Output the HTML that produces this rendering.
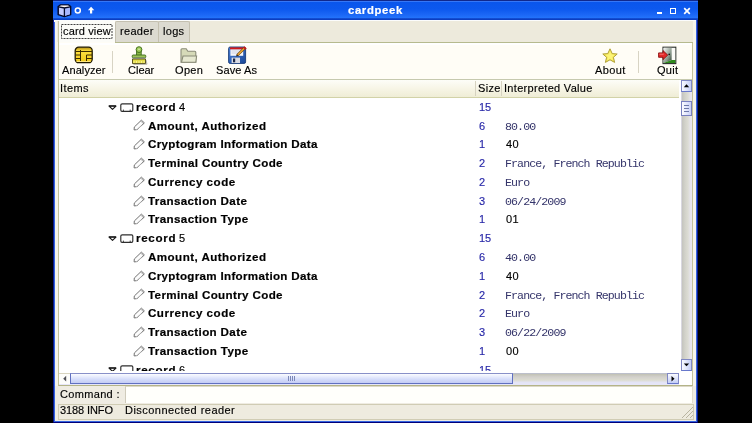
<!DOCTYPE html>
<html><head><meta charset="utf-8">
<style>
*{margin:0;padding:0;box-sizing:border-box}
html,body{width:752px;height:423px;overflow:hidden;background:#000}
body{position:relative;font-family:"Liberation Sans",sans-serif;font-size:11px;color:#000}
.a{position:absolute}
.t{position:absolute;white-space:pre;line-height:11px;will-change:transform;-webkit-text-stroke:0.15px currentColor}
.m{font-family:"Liberation Mono",monospace;-webkit-text-stroke:0}
.b{font-weight:700;-webkit-text-stroke:0.2px currentColor}
svg{position:absolute;overflow:visible}
</style></head><body>

<!-- window frame -->
<div class="a" style="left:53px;top:0;width:645px;height:423px;background:#0a1a8a"></div>
<div class="a" style="left:54px;top:0;width:643px;height:422px;background:#3464e0"></div>
<div class="a" style="left:53px;top:422px;width:645px;height:1px;background:#000078"></div>
<!-- title bar -->
<div class="a" style="left:53px;top:0;width:645px;height:20px;background:linear-gradient(#10288c 0px,#10288c 0.8px,#3a7af8 1.4px,#0a56ec 2.4px,#0c58ee 9px,#1c68f6 15px,#2272fa 17.6px,#0c40c4 18.8px,#0a3cc0 20px)"></div>
<div class="a" style="left:54px;top:20px;width:642px;height:1.5px;background:#fbfcfc"></div>
<!-- content bg -->
<div class="a" style="left:55px;top:20.5px;width:641px;height:400.5px;background:#f6f4ea"></div>
<!-- title icons -->
<svg style="left:57px;top:4px" width="15" height="14" viewBox="0 0 15 14">
  <path d="M1.2 2.6 L3.6 0.9 L11.4 0.9 L13.6 2.6 L13.6 10.6 L7.4 12.6 L1.2 10.6 Z" fill="#c4ccff" stroke="#060a28" stroke-width="1.5" stroke-linejoin="round"/>
  <path d="M1.8 2.7 L3.9 1.5 L11.1 1.5 L13 2.7 L7.4 3.9 Z" fill="#fff4f0"/>
  <path d="M7.4 4 L13 2.9 L13 10.3 L7.4 12 Z" fill="#a8b8ff"/>
  <path d="M1.6 2.8 L7.4 4 L13.2 2.8 M7.4 4 L7.4 12.3" fill="none" stroke="#060a28" stroke-width="1.3"/>
</svg>
<svg style="left:74px;top:7px" width="8" height="8" viewBox="0 0 8 8"><circle cx="3.8" cy="3.5" r="2.5" fill="none" stroke="#fff" stroke-width="1.5"/></svg>
<svg style="left:87px;top:6px" width="8" height="8" viewBox="0 0 8 8"><path d="M4.1 0.8 L7.3 4.2 L5.2 4.2 L5.2 7.6 L3 7.6 L3 4.2 L0.9 4.2 Z" fill="#fff"/></svg>

<div class="t b" style="left:348px;top:4.3px;font-size:11.3px;line-height:12px;color:#fff;letter-spacing:0.65px">cardpeek</div>

<!-- title buttons -->
<div class="a" style="left:657px;top:11.5px;width:5.2px;height:2.5px;background:#fff"></div>
<div class="a" style="left:669.8px;top:7.8px;width:6.6px;height:6.2px;border:1.1px solid #fff;border-top-width:1.8px"></div>
<svg style="left:682.5px;top:6.5px" width="8" height="8" viewBox="0 0 8 8"><path d="M1.2 1.2 L6.8 6.8 M6.8 1.2 L1.2 6.8" stroke="#fff" stroke-width="1.7"/></svg>

<!-- tabs -->
<div class="a" style="left:57px;top:21px;width:636px;height:21px;background:#edeadc"></div>
<div class="a" style="left:115px;top:21px;width:44px;height:21px;background:#dcdad0;border:1px solid #c4c0b0;border-bottom:none;border-radius:2px 2px 0 0"></div>
<div class="a" style="left:158px;top:21px;width:32px;height:21px;background:#dcdad0;border:1px solid #c4c0b0;border-bottom:none;border-radius:2px 2px 0 0"></div>
<div class="a" style="left:58px;top:20.5px;width:57px;height:22.5px;background:#fcfcf8;border-left:1px solid #c8c6a4"></div>
<svg style="left:61px;top:24px" width="52" height="15"><rect x="0.5" y="0.5" width="50.5" height="14" fill="none" stroke="#404040" stroke-width="1" stroke-dasharray="2 1"/></svg>
<div class="t" style="left:63px;top:25.5px;letter-spacing:0.15px">card view</div>
<div class="t" style="left:120px;top:25.5px;letter-spacing:0.3px">reader</div>
<div class="t" style="left:163px;top:25.5px;letter-spacing:0.3px">logs</div>

<!-- notebook page -->
<div class="a" style="left:58px;top:42px;width:635px;height:343.5px;background:#fffdf6;border:1px solid #c4c29c;border-top:none;border-bottom-color:#b4b488"></div>
<div class="a" style="left:115px;top:42px;width:578px;height:1px;background:#b6ba8e"></div>
<div class="a" style="left:59px;top:43px;width:633px;height:1.5px;background:#ffffff"></div>

<!-- toolbar bottom line -->
<div class="a" style="left:59px;top:79px;width:633px;height:1px;background:#c6c9ae"></div>

<!-- toolbar icons -->
<svg style="left:74px;top:46px" width="20" height="18" viewBox="0 0 20 18">
  <defs><linearGradient id="gold" x1="0" y1="0" x2="0" y2="1"><stop offset="0" stop-color="#b08a10"/><stop offset="0.25" stop-color="#ffe040"/><stop offset="1" stop-color="#f0c818"/></linearGradient></defs>
  <rect x="1.2" y="1.2" width="17" height="15.5" rx="3.5" fill="url(#gold)" stroke="#201a00" stroke-width="1.3"/>
  <path d="M1.5 5.5 H6.5 M1.5 9 H6.5 M1.5 12.5 H6.5 M12.5 9 H18 M12.5 12.5 H18 M6.5 4 V15.5 M12.5 9 V15.5 M6.5 5.5 H18" stroke="#3a2c00" stroke-width="1"/>
  <rect x="2.5" y="15" width="14" height="1" fill="#ffe880"/>
</svg>
<svg style="left:131px;top:45.5px" width="18" height="19" viewBox="0 0 18 19">
  <rect x="5.6" y="3.5" width="4.6" height="6" fill="#8ab848" stroke="#3c6a18" stroke-width="0.9"/>
  <circle cx="8" cy="3.6" r="2.9" fill="#a0cc58" stroke="#3c6a18" stroke-width="0.9"/>
  <circle cx="8" cy="3.2" r="0.8" fill="#e0f0c0"/>
  <rect x="1.2" y="9" width="13.6" height="2.8" rx="1" fill="#9cc458" stroke="#3c6a18" stroke-width="0.9"/>
  <rect x="1.5" y="11.8" width="13" height="1.2" fill="#b8b8c0"/>
  <path d="M1.5 13 H14.5 V17.6 H1.5 Z" fill="#e4dc48" stroke="#4a4410" stroke-width="0.9"/>
  <path d="M3 17 V15 M5.5 17 V15 M8 17 V15 M10.5 17 V15 M13 17 V15" stroke="#fff8b0" stroke-width="0.7"/>
  <path d="M15 14 L16 18.2 L2.5 18.4" fill="none" stroke="#606060" stroke-opacity="0.5" stroke-width="0.9"/>
</svg>
<svg style="left:180px;top:48px" width="18" height="16" viewBox="0 0 18 16">
  <path d="M1 1.8 Q1 0.8 2 0.8 L6.2 0.8 L7.8 3.2 L14.8 3.2 Q15.8 3.2 15.8 4.2 L15.8 14.2 L1 14.2 Z" fill="#d6dab8" stroke="#8a8c78" stroke-width="1.1"/>
  <path d="M3 8 L16.6 8 L15.8 14.2 L1.5 14.2 Z" fill="#e6e8d0" stroke="#8a8c78" stroke-width="1.1"/>
</svg>
<svg style="left:228px;top:46px" width="19" height="18" viewBox="0 0 19 18">
  <defs><linearGradient id="fl" x1="0" y1="0" x2="1" y2="1"><stop offset="0" stop-color="#4a80d8"/><stop offset="1" stop-color="#1a4898"/></linearGradient></defs>
  <rect x="0.6" y="1" width="17" height="16.4" rx="1.5" fill="url(#fl)" stroke="#183a78" stroke-width="0.9"/>
  <rect x="2.4" y="3.2" width="12.8" height="6.6" fill="#f6f6f8"/>
  <rect x="2" y="1.4" width="14" height="1.9" fill="#d41818"/>
  <path d="M3.5 5 H12 M3.5 7 H10" stroke="#b0b8d8" stroke-width="0.6"/>
  <rect x="3.6" y="11.6" width="8.4" height="5.4" fill="#dadce4"/>
  <rect x="5" y="12.5" width="2.2" height="3.8" fill="#1c2848"/>
  <path d="M9.2 9.4 L16.8 1.8" stroke="#5a3a10" stroke-width="2.6"/>
  <path d="M9.4 9.2 L16.6 2" stroke="#f0a830" stroke-width="1.6"/>
  <path d="M15.8 1 L18 3.1" stroke="#c81818" stroke-width="2"/>
  <path d="M8.4 10.2 L9.8 8.8" stroke="#302010" stroke-width="1.2"/>
</svg>
<svg style="left:602px;top:48px" width="16" height="16" viewBox="0 0 16 16">
  <path d="M8 0.8 L10.2 5.6 L15.2 6 L11.4 9.3 L12.6 14.4 L8 11.8 L3.4 14.4 L4.6 9.3 L0.8 6 L5.8 5.6 Z" fill="#f6ea5c" stroke="#b0a038" stroke-width="1" stroke-linejoin="round"/>
  <path d="M8 3.5 L9.3 6.6 L12.4 6.9 L10 9 L10.8 12.2 L8 10.5 L5.2 12.2 L6 9 L3.6 6.9 L6.7 6.6 Z" fill="#fcf478" />
</svg>
<svg style="left:657px;top:46px" width="20" height="19" viewBox="0 0 20 19">
  <defs><linearGradient id="dr" x1="0" y1="0" x2="1" y2="1"><stop offset="0" stop-color="#f8f8f8"/><stop offset="0.6" stop-color="#8a9a8c"/><stop offset="1" stop-color="#2a3a2a"/></linearGradient></defs>
  <rect x="6" y="1.2" width="12.8" height="16.4" fill="#f0f0ee" stroke="#2a2e2a" stroke-width="1.1"/>
  <path d="M6.5 1.7 L14.6 1.7 L14.6 14 L6.5 17.1 Z" fill="url(#dr)"/>
  <path d="M6.5 17.1 L14.6 14 L18.3 14 L18.3 17.1 Z" fill="#2e8a1c"/>
  <rect x="15" y="2" width="3.2" height="12" fill="#fafaf6"/>
  <circle cx="12.2" cy="8.4" r="0.8" fill="#101010"/>
  <path d="M1.6 6.9 L6 6.9 L6 4.6 L10.7 9.1 L6 13.6 L6 11.3 L1.6 11.3 Z" fill="#e42a2a" stroke="#8a1010" stroke-width="0.9" stroke-linejoin="round"/>
  <path d="M2.4 8.2 H6.8" stroke="#ff8888" stroke-width="0.8"/>
</svg>

<!-- toolbar separators -->
<div class="a" style="left:111.5px;top:51px;width:1px;height:22px;background:#d8d4c4"></div>
<div class="a" style="left:638px;top:51px;width:1px;height:22px;background:#d8d4c4"></div>

<!-- toolbar labels -->
<div class="t" style="left:62px;top:65.2px;letter-spacing:0.09px">Analyzer</div>
<div class="t" style="left:128px;top:65.2px;letter-spacing:0px">Clear</div>
<div class="t" style="left:174.5px;top:65.2px;letter-spacing:0.35px">Open</div>
<div class="t" style="left:216px;top:65.2px;letter-spacing:0.1px">Save As</div>
<div class="t" style="left:594.5px;top:65.2px;letter-spacing:0.4px">About</div>
<div class="t" style="left:656.5px;top:65.2px;letter-spacing:0.27px">Quit</div>

<!-- tree view -->
<div class="a" style="left:59px;top:80px;width:633px;height:305px;background:#fff"></div>
<!-- header -->
<div class="a" style="left:59px;top:80px;width:619.5px;height:18px;background:linear-gradient(#fdfdf8,#f7f5e6 50%,#efedd6);border-bottom:1px solid #d2d2a8"></div>
<div class="a" style="left:475px;top:81px;width:1px;height:15px;background:#d6d2c0"></div>
<div class="a" style="left:501px;top:81px;width:1px;height:15px;background:#d6d2c0"></div>
<div class="t" style="left:60px;top:83.3px;letter-spacing:0.4px">Items</div>
<div class="t" style="left:477.5px;top:83.3px;letter-spacing:0.33px">Size</div>
<div class="t" style="left:504px;top:83.3px;letter-spacing:0.3px">Interpreted Value</div>

<!-- rows -->
<div><div class="a" style="left:58px;top:97px;width:621px;height:274px;overflow:hidden">
<svg style="left:49.5px;top:7.70px" width="9" height="5" viewBox="0 0 9 5"><path d="M1 1 L8 1 L4.5 4.3 Z" fill="#fff" stroke="#1a1a1a" stroke-width="1.15" stroke-linejoin="round"/><path d="M1 1 L8 1" stroke="#1a1a1a" stroke-width="1.4"/></svg>
<svg style="left:62px;top:5.60px" width="14" height="10" viewBox="0 0 14 10"><path d="M2.2 0.8 H11.6 Q12.8 0.8 12.8 2 V7 Q12.8 8.3 11.6 8.3 H2 Q0.8 8.3 0.8 7 V2 Q0.8 0.8 2.2 0.8 Z" fill="#fff" stroke="#2e2e2e" stroke-width="1.15"/><path d="M3.4 8.3 V6.6 M10.2 8.3 V6.6" stroke="#2e2e2e" stroke-width="0.9"/></svg>
<div class="t" style="left:77.5px;top:3.90px"><span class="b" style="font-size:11.6px;letter-spacing:0.7px">record</span><span style="margin-left:2.8px">4</span></div>
<div class="t" style="left:420.8px;top:4.90px;color:#2828a8">15</div>
<svg style="left:75px;top:22.46px" width="13" height="12" viewBox="0 0 13 12"><path d="M1.3 8 L8.4 1.2 L11.3 3.8 L4.2 10.6 L1.1 10.9 Z" fill="#fcfcfc" stroke="#6a6a6a" stroke-width="0.95" stroke-linejoin="round"/><path d="M7.6 2 L10.5 4.6" stroke="#8a8a8a" stroke-width="0.7"/><path d="M2.6 11.2 L11.6 4.6" stroke="#c8c8c8" stroke-width="0.7"/></svg>
<div class="t b" style="left:89.5px;top:22.66px;font-size:11.6px;letter-spacing:0.45px">Amount, Authorized</div>
<div class="t" style="left:420.8px;top:23.66px;color:#2828a8">6</div>
<div class="t m" style="left:447px;top:23.66px;font-size:11.6px;letter-spacing:-0.91px;color:#34346a">80.00</div>
<svg style="left:75px;top:41.22px" width="13" height="12" viewBox="0 0 13 12"><path d="M1.3 8 L8.4 1.2 L11.3 3.8 L4.2 10.6 L1.1 10.9 Z" fill="#fcfcfc" stroke="#6a6a6a" stroke-width="0.95" stroke-linejoin="round"/><path d="M7.6 2 L10.5 4.6" stroke="#8a8a8a" stroke-width="0.7"/><path d="M2.6 11.2 L11.6 4.6" stroke="#c8c8c8" stroke-width="0.7"/></svg>
<div class="t b" style="left:89.5px;top:41.42px;font-size:11.6px;letter-spacing:0.32px">Cryptogram Information Data</div>
<div class="t" style="left:420.8px;top:42.42px;color:#2828a8">1</div>
<div class="t" style="left:447.5px;top:42.42px;letter-spacing:0.3px">40</div>
<svg style="left:75px;top:59.98px" width="13" height="12" viewBox="0 0 13 12"><path d="M1.3 8 L8.4 1.2 L11.3 3.8 L4.2 10.6 L1.1 10.9 Z" fill="#fcfcfc" stroke="#6a6a6a" stroke-width="0.95" stroke-linejoin="round"/><path d="M7.6 2 L10.5 4.6" stroke="#8a8a8a" stroke-width="0.7"/><path d="M2.6 11.2 L11.6 4.6" stroke="#c8c8c8" stroke-width="0.7"/></svg>
<div class="t b" style="left:89.5px;top:60.18px;font-size:11.6px;letter-spacing:0.36px">Terminal Country Code</div>
<div class="t" style="left:420.8px;top:61.18px;color:#2828a8">2</div>
<div class="t m" style="left:447px;top:61.18px;font-size:11.6px;letter-spacing:-0.91px;color:#34346a">France, French Republic</div>
<svg style="left:75px;top:78.74px" width="13" height="12" viewBox="0 0 13 12"><path d="M1.3 8 L8.4 1.2 L11.3 3.8 L4.2 10.6 L1.1 10.9 Z" fill="#fcfcfc" stroke="#6a6a6a" stroke-width="0.95" stroke-linejoin="round"/><path d="M7.6 2 L10.5 4.6" stroke="#8a8a8a" stroke-width="0.7"/><path d="M2.6 11.2 L11.6 4.6" stroke="#c8c8c8" stroke-width="0.7"/></svg>
<div class="t b" style="left:89.5px;top:78.94px;font-size:11.6px;letter-spacing:0.5px">Currency code</div>
<div class="t" style="left:420.8px;top:79.94px;color:#2828a8">2</div>
<div class="t m" style="left:447px;top:79.94px;font-size:11.6px;letter-spacing:-0.91px;color:#34346a">Euro</div>
<svg style="left:75px;top:97.50px" width="13" height="12" viewBox="0 0 13 12"><path d="M1.3 8 L8.4 1.2 L11.3 3.8 L4.2 10.6 L1.1 10.9 Z" fill="#fcfcfc" stroke="#6a6a6a" stroke-width="0.95" stroke-linejoin="round"/><path d="M7.6 2 L10.5 4.6" stroke="#8a8a8a" stroke-width="0.7"/><path d="M2.6 11.2 L11.6 4.6" stroke="#c8c8c8" stroke-width="0.7"/></svg>
<div class="t b" style="left:89.5px;top:97.70px;font-size:11.6px;letter-spacing:0.36px">Transaction Date</div>
<div class="t" style="left:420.8px;top:98.70px;color:#2828a8">3</div>
<div class="t m" style="left:447px;top:98.70px;font-size:11.6px;letter-spacing:-0.91px;color:#34346a">06/24/2009</div>
<svg style="left:75px;top:116.26px" width="13" height="12" viewBox="0 0 13 12"><path d="M1.3 8 L8.4 1.2 L11.3 3.8 L4.2 10.6 L1.1 10.9 Z" fill="#fcfcfc" stroke="#6a6a6a" stroke-width="0.95" stroke-linejoin="round"/><path d="M7.6 2 L10.5 4.6" stroke="#8a8a8a" stroke-width="0.7"/><path d="M2.6 11.2 L11.6 4.6" stroke="#c8c8c8" stroke-width="0.7"/></svg>
<div class="t b" style="left:89.5px;top:116.46px;font-size:11.6px;letter-spacing:0.38px">Transaction Type</div>
<div class="t" style="left:420.8px;top:117.46px;color:#2828a8">1</div>
<div class="t" style="left:447.5px;top:117.46px;letter-spacing:0.3px">01</div>
<svg style="left:49.5px;top:139.02px" width="9" height="5" viewBox="0 0 9 5"><path d="M1 1 L8 1 L4.5 4.3 Z" fill="#fff" stroke="#1a1a1a" stroke-width="1.15" stroke-linejoin="round"/><path d="M1 1 L8 1" stroke="#1a1a1a" stroke-width="1.4"/></svg>
<svg style="left:62px;top:136.92px" width="14" height="10" viewBox="0 0 14 10"><path d="M2.2 0.8 H11.6 Q12.8 0.8 12.8 2 V7 Q12.8 8.3 11.6 8.3 H2 Q0.8 8.3 0.8 7 V2 Q0.8 0.8 2.2 0.8 Z" fill="#fff" stroke="#2e2e2e" stroke-width="1.15"/><path d="M3.4 8.3 V6.6 M10.2 8.3 V6.6" stroke="#2e2e2e" stroke-width="0.9"/></svg>
<div class="t" style="left:77.5px;top:135.22px"><span class="b" style="font-size:11.6px;letter-spacing:0.7px">record</span><span style="margin-left:2.8px">5</span></div>
<div class="t" style="left:420.8px;top:136.22px;color:#2828a8">15</div>
<svg style="left:75px;top:153.78px" width="13" height="12" viewBox="0 0 13 12"><path d="M1.3 8 L8.4 1.2 L11.3 3.8 L4.2 10.6 L1.1 10.9 Z" fill="#fcfcfc" stroke="#6a6a6a" stroke-width="0.95" stroke-linejoin="round"/><path d="M7.6 2 L10.5 4.6" stroke="#8a8a8a" stroke-width="0.7"/><path d="M2.6 11.2 L11.6 4.6" stroke="#c8c8c8" stroke-width="0.7"/></svg>
<div class="t b" style="left:89.5px;top:153.98px;font-size:11.6px;letter-spacing:0.45px">Amount, Authorized</div>
<div class="t" style="left:420.8px;top:154.98px;color:#2828a8">6</div>
<div class="t m" style="left:447px;top:154.98px;font-size:11.6px;letter-spacing:-0.91px;color:#34346a">40.00</div>
<svg style="left:75px;top:172.54px" width="13" height="12" viewBox="0 0 13 12"><path d="M1.3 8 L8.4 1.2 L11.3 3.8 L4.2 10.6 L1.1 10.9 Z" fill="#fcfcfc" stroke="#6a6a6a" stroke-width="0.95" stroke-linejoin="round"/><path d="M7.6 2 L10.5 4.6" stroke="#8a8a8a" stroke-width="0.7"/><path d="M2.6 11.2 L11.6 4.6" stroke="#c8c8c8" stroke-width="0.7"/></svg>
<div class="t b" style="left:89.5px;top:172.74px;font-size:11.6px;letter-spacing:0.32px">Cryptogram Information Data</div>
<div class="t" style="left:420.8px;top:173.74px;color:#2828a8">1</div>
<div class="t" style="left:447.5px;top:173.74px;letter-spacing:0.3px">40</div>
<svg style="left:75px;top:191.30px" width="13" height="12" viewBox="0 0 13 12"><path d="M1.3 8 L8.4 1.2 L11.3 3.8 L4.2 10.6 L1.1 10.9 Z" fill="#fcfcfc" stroke="#6a6a6a" stroke-width="0.95" stroke-linejoin="round"/><path d="M7.6 2 L10.5 4.6" stroke="#8a8a8a" stroke-width="0.7"/><path d="M2.6 11.2 L11.6 4.6" stroke="#c8c8c8" stroke-width="0.7"/></svg>
<div class="t b" style="left:89.5px;top:191.50px;font-size:11.6px;letter-spacing:0.36px">Terminal Country Code</div>
<div class="t" style="left:420.8px;top:192.50px;color:#2828a8">2</div>
<div class="t m" style="left:447px;top:192.50px;font-size:11.6px;letter-spacing:-0.91px;color:#34346a">France, French Republic</div>
<svg style="left:75px;top:210.06px" width="13" height="12" viewBox="0 0 13 12"><path d="M1.3 8 L8.4 1.2 L11.3 3.8 L4.2 10.6 L1.1 10.9 Z" fill="#fcfcfc" stroke="#6a6a6a" stroke-width="0.95" stroke-linejoin="round"/><path d="M7.6 2 L10.5 4.6" stroke="#8a8a8a" stroke-width="0.7"/><path d="M2.6 11.2 L11.6 4.6" stroke="#c8c8c8" stroke-width="0.7"/></svg>
<div class="t b" style="left:89.5px;top:210.26px;font-size:11.6px;letter-spacing:0.5px">Currency code</div>
<div class="t" style="left:420.8px;top:211.26px;color:#2828a8">2</div>
<div class="t m" style="left:447px;top:211.26px;font-size:11.6px;letter-spacing:-0.91px;color:#34346a">Euro</div>
<svg style="left:75px;top:228.82px" width="13" height="12" viewBox="0 0 13 12"><path d="M1.3 8 L8.4 1.2 L11.3 3.8 L4.2 10.6 L1.1 10.9 Z" fill="#fcfcfc" stroke="#6a6a6a" stroke-width="0.95" stroke-linejoin="round"/><path d="M7.6 2 L10.5 4.6" stroke="#8a8a8a" stroke-width="0.7"/><path d="M2.6 11.2 L11.6 4.6" stroke="#c8c8c8" stroke-width="0.7"/></svg>
<div class="t b" style="left:89.5px;top:229.02px;font-size:11.6px;letter-spacing:0.36px">Transaction Date</div>
<div class="t" style="left:420.8px;top:230.02px;color:#2828a8">3</div>
<div class="t m" style="left:447px;top:230.02px;font-size:11.6px;letter-spacing:-0.91px;color:#34346a">06/22/2009</div>
<svg style="left:75px;top:247.58px" width="13" height="12" viewBox="0 0 13 12"><path d="M1.3 8 L8.4 1.2 L11.3 3.8 L4.2 10.6 L1.1 10.9 Z" fill="#fcfcfc" stroke="#6a6a6a" stroke-width="0.95" stroke-linejoin="round"/><path d="M7.6 2 L10.5 4.6" stroke="#8a8a8a" stroke-width="0.7"/><path d="M2.6 11.2 L11.6 4.6" stroke="#c8c8c8" stroke-width="0.7"/></svg>
<div class="t b" style="left:89.5px;top:247.78px;font-size:11.6px;letter-spacing:0.38px">Transaction Type</div>
<div class="t" style="left:420.8px;top:248.78px;color:#2828a8">1</div>
<div class="t" style="left:447.5px;top:248.78px;letter-spacing:0.3px">00</div>
<svg style="left:49.5px;top:270.34px" width="9" height="5" viewBox="0 0 9 5"><path d="M1 1 L8 1 L4.5 4.3 Z" fill="#fff" stroke="#1a1a1a" stroke-width="1.15" stroke-linejoin="round"/><path d="M1 1 L8 1" stroke="#1a1a1a" stroke-width="1.4"/></svg>
<svg style="left:62px;top:268.24px" width="14" height="10" viewBox="0 0 14 10"><path d="M2.2 0.8 H11.6 Q12.8 0.8 12.8 2 V7 Q12.8 8.3 11.6 8.3 H2 Q0.8 8.3 0.8 7 V2 Q0.8 0.8 2.2 0.8 Z" fill="#fff" stroke="#2e2e2e" stroke-width="1.15"/><path d="M3.4 8.3 V6.6 M10.2 8.3 V6.6" stroke="#2e2e2e" stroke-width="0.9"/></svg>
<div class="t" style="left:77.5px;top:266.54px"><span class="b" style="font-size:11.6px;letter-spacing:0.7px">record</span><span style="margin-left:2.8px">6</span></div>
<div class="t" style="left:420.8px;top:267.54px;color:#2828a8">15</div>
</div></div>
<!-- /rows -->

<!-- vertical scrollbar -->
<div class="a" style="left:681px;top:80px;width:11px;height:291px;background:linear-gradient(90deg,#e2e0f0 0,#c6c6c0 1.5px,#d2d2ca 4px,#dcdcd4 7px,#e6e4ec 9.5px,#e8e6f4 11px)"></div>
<div class="a" style="left:681px;top:80px;width:11px;height:11.5px;background:linear-gradient(90deg,#fafbff,#c4cef6);border:1px solid #8088c4;border-bottom-color:#6878cc"></div>
<svg style="left:681px;top:80px" width="11" height="12"><path d="M2.8 7.2 L8.2 7.2 L5.5 4.3 Z" fill="#000"/></svg>
<div class="a" style="left:681px;top:101px;width:11px;height:15px;background:linear-gradient(90deg,#fdfdff,#c8d0f8);border:1px solid #7880c0"></div>
<div class="a" style="left:684px;top:105px;width:5px;height:1.3px;background:#6c78a8"></div>
<div class="a" style="left:684px;top:108px;width:5px;height:1.3px;background:#6c78a8"></div>
<div class="a" style="left:684px;top:110.8px;width:5px;height:1.3px;background:#6c78a8"></div>
<div class="a" style="left:681px;top:359px;width:11px;height:11.5px;background:linear-gradient(90deg,#fafbff,#c4cef6);border:1px solid #8088c4;border-bottom-color:#6878cc"></div>
<svg style="left:681px;top:359px" width="11" height="12"><path d="M2.8 4.4 L8.2 4.4 L5.5 7.3 Z" fill="#000"/></svg>

<!-- horizontal scrollbar -->
<div class="a" style="left:59px;top:372.5px;width:620px;height:12px;background:linear-gradient(#b8bcd4 0,#c4c4b8 1.5px,#d2d0cc 4px,#dcdcd0 7px,#e4e4f6 9.5px,#e6e6f8 11.5px)"></div>
<div class="a" style="left:59px;top:372.5px;width:11px;height:11.5px;background:#fdfdfb;border-top:1px solid #d8d4c0"></div>
<svg style="left:59px;top:372.5px" width="11" height="12"><path d="M7.2 2.8 L7.2 8.6 L4.2 5.7 Z" fill="#505058"/></svg>
<div class="a" style="left:70px;top:372.5px;width:443px;height:11.5px;background:linear-gradient(#fbfcff,#d4dcfa 60%,#c4ccf4);border:1px solid #6070c0;border-top-color:#8890c8"></div>
<div class="a" style="left:287.5px;top:376px;width:1px;height:5px;background:#7c88b8"></div>
<div class="a" style="left:289.5px;top:376px;width:1px;height:5px;background:#7c88b8"></div>
<div class="a" style="left:291.5px;top:376px;width:1px;height:5px;background:#7c88b8"></div>
<div class="a" style="left:293.5px;top:376px;width:1px;height:5px;background:#7c88b8"></div>
<div class="a" style="left:667px;top:372.5px;width:11.5px;height:11.5px;background:linear-gradient(#fafbff,#c4cef6);border:1px solid #8088c4;border-bottom-color:#6878cc"></div>
<svg style="left:667px;top:372.5px" width="12" height="12"><path d="M4.5 3 L4.5 8.5 L7.5 5.75 Z" fill="#000"/></svg>

<!-- command row -->
<div class="a" style="left:55px;top:385.5px;width:641px;height:35.5px;background:#efece2"></div>
<div class="t" style="left:59.5px;top:388.6px;letter-spacing:0.33px">Command :</div>
<div class="a" style="left:125px;top:385.5px;width:568px;height:17.5px;background:#fffffb;border-left:1px solid #cfcbbb;border-top:1px solid #dcd8c8;border-right:1px solid #e0dccc"></div>

<!-- status bar -->
<div class="a" style="left:57.5px;top:403.5px;width:636px;height:16px;border:1px solid #d0ccb4;background:#eeebdf"></div>
<div class="t" style="left:59.5px;top:405px;letter-spacing:-0.1px">3188 INFO</div>
<div class="t" style="left:125px;top:405px;letter-spacing:0.46px">Disconnected reader</div>
<svg style="left:680px;top:405px" width="14" height="14"><path d="M13 2 L2 13 M13 6 L6 13 M13 10 L10 13" stroke="#b8b4a0" stroke-width="1"/></svg>

</body></html>
